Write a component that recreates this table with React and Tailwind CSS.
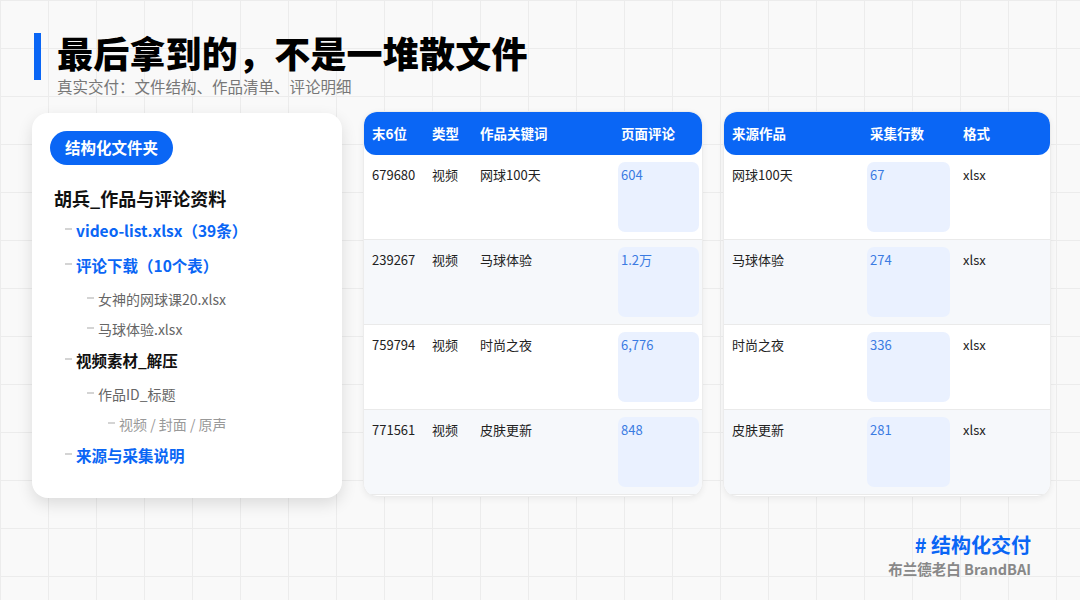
import React from "react";

const tree = [
  { text: "胡兵_作品与评论资料", level: 0, cls: "text-[18px] font-bold text-[#111]", mt: "mt-[21px]" },
  { text: "video-list.xlsx（39条）", level: 1, cls: "text-[15.5px] font-bold text-[#0a66f5]", mt: "mt-[8px]" },
  { text: "评论下载（10个表）", level: 1, cls: "text-[15.5px] font-bold text-[#0a66f5]", mt: "mt-[11px]" },
  { text: "女神的网球课20.xlsx", level: 2, cls: "text-[14px] text-[#666]", mt: "mt-[10px]" },
  { text: "马球体验.xlsx", level: 2, cls: "text-[14px] text-[#666]", mt: "mt-[6px]" },
  { text: "视频素材_解压", level: 1, cls: "text-[15.5px] font-bold text-[#111]", mt: "mt-[7px]" },
  { text: "作品ID_标题", level: 2, cls: "text-[14px] text-[#666]", mt: "mt-[10px]" },
  { text: "视频 / 封面 / 原声", level: 3, cls: "text-[14px] text-[#999]", mt: "mt-[6px]" },
  { text: "来源与采集说明", level: 1, cls: "text-[15.5px] font-bold text-[#0a66f5]", mt: "mt-[7px]" },
];

const works = [
  { id: "679680", type: "视频", name: "网球100天", count: "604", rows: "67" },
  { id: "239267", type: "视频", name: "马球体验", count: "1.2万", rows: "274" },
  { id: "759794", type: "视频", name: "时尚之夜", count: "6,776", rows: "336" },
  { id: "771561", type: "视频", name: "皮肤更新", count: "848", rows: "281" },
];

const indent = ["ml-0", "ml-[11px]", "ml-[33px]", "ml-[54px]"];

function TreeRow({ item }) {
  return (
    <div className={`flex items-center h-[24px] ${item.mt}`}>
      {item.level > 0 && (
        <span className={`${indent[item.level]} w-[7px] h-[2px] bg-[#d4d4d4] mr-[4px] -mt-[2px]`}></span>
      )}
      <span className={`${item.cls} whitespace-nowrap leading-[24px]`}>{item.text}</span>
    </div>
  );
}

function App() {
  return (
    <div className="w-[1080px] h-[600px] overflow-hidden relative bg-[#f9f9f9] bg-[linear-gradient(#ececec_1px,transparent_1px),linear-gradient(90deg,#ececec_1px,transparent_1px)] bg-[size:48px_48px] font-['Noto_Sans_CJK_SC','Noto_Sans',sans-serif]">
      {/* title */}
      <div className="flex pt-[33px] pl-[34px]">
        <div className="w-[7px] h-[47px] bg-[#0a66f5]"></div>
        <div className="ml-[16px]">
          <h1 className="text-[36px] font-black text-black leading-[32px] mt-[3px] tracking-[0.2px]">最后拿到的，不是一堆散文件</h1>
          <p className="text-[15.5px] text-[#777] leading-[18px] mt-[9px]">真实交付：文件结构、作品清单、评论明细</p>
        </div>
      </div>

      <div className="flex items-start pl-[32px] mt-[18px]">
        {/* folder card */}
        <div className="w-[310px] h-[385px] bg-white rounded-[16px] shadow-[0_6px_16px_rgba(0,0,0,0.12)] pt-[18px] pl-[18px]">
          <div className="inline-flex items-center h-[34px] px-[15px] rounded-full bg-[#0a66f5] text-white text-[15.5px] font-bold">
            结构化文件夹
          </div>
          <div className="pl-[4px]">
            {tree.map((item, i) => (
              <TreeRow key={i} item={item} />
            ))}
          </div>
        </div>

        {/* works table */}
        <div className="ml-[21px] w-[340px] h-[386px] bg-white rounded-[14px] border border-[#ececec] shadow-[0_2px_6px_rgba(0,0,0,0.06)] overflow-hidden -mt-[2px]">
          <div className="flex items-center h-[43px] bg-[#0a66f5] rounded-[12px] pl-[8px] text-white text-[13.5px] font-bold">
            <span className="w-[60px]">末6位</span>
            <span className="w-[48px]">类型</span>
            <span className="w-[141px]">作品关键词</span>
            <span>页面评论</span>
          </div>
          {works.map((w, i) => (
            <div key={i} className={`flex h-[85px] pl-[8px] pt-[7px] border-b border-[#eaeaea] text-[13px] text-[#222] ${i % 2 ? "bg-[#f6f8fb]" : "bg-white"}`}>
              <span className="w-[60px] pt-[4px] leading-[18px]">{w.id}</span>
              <span className="w-[48px] pt-[4px] leading-[18px]">{w.type}</span>
              <span className="w-[138px] pt-[4px] leading-[18px]">{w.name}</span>
              <div className="w-[81px] h-[70px] rounded-[7px] bg-[#eaf1ff] pl-[3px] pt-[4px] leading-[18px] text-[#3a7be2]">{w.count}</div>
            </div>
          ))}
        </div>

        {/* source table */}
        <div className="ml-[20px] w-[328px] h-[386px] bg-white rounded-[14px] border border-[#ececec] shadow-[0_2px_6px_rgba(0,0,0,0.06)] overflow-hidden -mt-[2px]">
          <div className="flex items-center h-[43px] bg-[#0a66f5] rounded-[12px] pl-[8px] text-white text-[13.5px] font-bold">
            <span className="w-[138px]">来源作品</span>
            <span className="w-[93px]">采集行数</span>
            <span>格式</span>
          </div>
          {works.map((w, i) => (
            <div key={i} className={`flex h-[85px] pl-[8px] pt-[7px] border-b border-[#eaeaea] text-[13px] text-[#222] ${i % 2 ? "bg-[#f6f8fb]" : "bg-white"}`}>
              <span className="w-[135px] pt-[4px] leading-[18px]">{w.name}</span>
              <div className="w-[83px] h-[70px] rounded-[7px] bg-[#eaf1ff] pl-[3px] pt-[4px] leading-[18px] text-[#3a7be2]">{w.rows}</div>
              <span className="ml-[13px] pt-[4px] leading-[18px]">xlsx</span>
            </div>
          ))}
        </div>
      </div>

      {/* footer */}
      <div className="flex flex-col items-end pr-[49px] mt-[34px]">
        <span className="text-[20px] font-bold text-[#0a66f5] leading-[26px]"># 结构化交付</span>
        <span className="text-[14.5px] font-bold text-[#888] leading-[20px] mt-[1px]">布兰德老白 BrandBAI</span>
      </div>
    </div>
  );
}

export default App;
